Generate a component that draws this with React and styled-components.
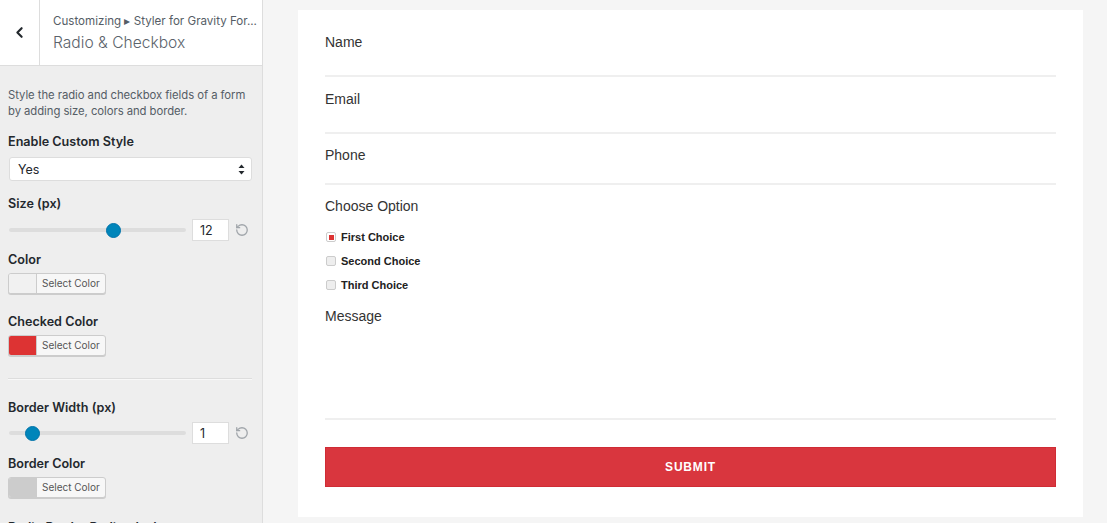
import styled, { createGlobalStyle } from "styled-components";
import { ChevronLeft, RotateCcw } from "lucide-react";

const GlobalStyle = createGlobalStyle`
  html, body {
    margin: 0;
    padding: 0;
    height: 100%;
  }
  body {
    font-family: Inter, "Noto Sans", sans-serif;
    background: #f5f5f5;
  }
  * {
    box-sizing: border-box;
  }
`;

const Page = styled.div`
  display: flex;
  height: 523px;
  overflow: hidden;
`;

const Sidebar = styled.aside`
  width: 263px;
  flex-shrink: 0;
  background: #eeeeee;
  border-right: 1px solid #dddddd;
  overflow: hidden;
`;

const Header = styled.div`
  display: flex;
  height: 66px;
  background: #ffffff;
  border-bottom: 1px solid #dddddd;
`;

const BackButton = styled.div`
  width: 40px;
  flex-shrink: 0;
  display: flex;
  align-items: center;
  justify-content: center;
  border-right: 1px solid #dddddd;
  color: #23282d;
`;

const HeaderText = styled.div`
  padding: 13px 0 0 13px;
  color: #555d66;
  min-width: 0;
`;

const Crumb = styled.div`
  font-size: 11.6px;
  line-height: 16px;
  white-space: nowrap;
`;

const Title = styled.div`
  font-size: 15.6px;
  font-weight: 300;
  line-height: 24px;
  margin-top: 2px;
  color: #5b636b;
`;

const Controls = styled.div`
  padding: 21px 10px 0 8px;
`;

const Description = styled.p`
  margin: 0 0 14px;
  font-size: 11.3px;
  letter-spacing: -0.05px;
  line-height: 16px;
  color: #555d66;
`;

const Control = styled.div`
  margin-bottom: ${(p) => p.$gap}px;
`;

const Label = styled.div`
  font-size: 12.6px;
  font-weight: 600;
  line-height: 18px;
  color: #23282d;
  margin-bottom: ${(p) => p.$gap}px;
  white-space: nowrap;
`;

const Select = styled.div`
  height: 24px;
  margin-left: 1px;
  display: flex;
  align-items: center;
  justify-content: space-between;
  padding: 0 6px 0 8px;
  background: #ffffff;
  border: 1px solid #dddddd;
  border-radius: 3px;
  font-size: 12.5px;
  color: #23282d;
`;

const SliderRow = styled.div`
  display: flex;
  align-items: center;
  height: 22px;
`;

const Track = styled.div`
  position: relative;
  width: 177px;
  height: 4px;
  margin-left: 1px;
  border-radius: 2px;
  background: #dddddd;
`;

const Thumb = styled.span`
  position: absolute;
  top: 50%;
  width: 15px;
  height: 15px;
  margin: -7.5px 0 0 -7.5px;
  border-radius: 50%;
  background: #0085ba;
  border: 1px solid #0073aa;
`;

const NumberBox = styled.div`
  width: 37px;
  height: 22px;
  margin-left: 6px;
  padding: 0 7px;
  display: flex;
  align-items: center;
  background: #ffffff;
  border: 1px solid #dddddd;
  font-size: 12.5px;
  color: #23282d;
`;

const Reset = styled.span`
  display: flex;
  margin-left: 6px;
  color: #a0a5aa;
`;

const ColorButton = styled.div`
  display: flex;
  width: fit-content;
  height: 21px;
  border: 1px solid #cccccc;
  border-radius: 3px;
  box-shadow: 0 1px 0 #cccccc;
  background: #f7f7f7;
  overflow: hidden;
`;

const Swatch = styled.span`
  width: 28px;
  background: ${(p) => p.$color};
  border-right: 1px solid #cccccc;
`;

const ColorText = styled.span`
  padding: 0 5px 0 5px;
  font-size: 10px;
  line-height: 19px;
  color: #555555;
`;

const Divider = styled.hr`
  margin: 0 0 19px;
  border: 0;
  border-top: 1px solid #dddddd;
  border-bottom: 1px solid #f8f8f8;
`;

const Preview = styled.main`
  flex: 1;
  display: flex;
  padding: 10px 24px 6px 35px;
  background: #f5f5f5;
`;

const Card = styled.div`
  flex: 1;
  background: #ffffff;
  padding: 24px 27px 0;
  font-family: "Liberation Sans", Arial, sans-serif;
  color: #333333;
`;

const Field = styled.div`
  margin-bottom: ${(p) => p.$gap}px;
`;

const FieldLabel = styled.div`
  font-size: 14px;
  line-height: 17px;
`;

const InputLine = styled.div`
  height: ${(p) => p.$height}px;
  border-bottom: 2px solid #efefef;
`;

const Choices = styled.div`
  margin-top: 10px;
`;

const Choice = styled.div`
  display: flex;
  align-items: center;
  height: 24px;
  font-size: 11px;
  font-weight: 700;
  color: #222222;
`;

const Box = styled.span`
  width: 10px;
  height: 10px;
  margin: 0 5px 0 1px;
  display: flex;
  align-items: center;
  justify-content: center;
  border: 1px solid #cccccc;
  border-radius: 2px;
  background: ${(p) => (p.$checked ? "#ffffff" : "#eeeeee")};

  &::after {
    content: "";
    display: ${(p) => (p.$checked ? "block" : "none")};
    width: 5px;
    height: 5px;
    background: #dd3333;
  }
`;

const Submit = styled.div`
  height: 40px;
  display: flex;
  align-items: center;
  justify-content: center;
  background: #d9363e;
  border: 1px solid #cf2c35;
  color: #ffffff;
  font-size: 12px;
  font-weight: 700;
  letter-spacing: 0.8px;
`;

const SelectArrows = () => (
  <svg width="7" height="11" viewBox="0 0 7 11">
    <path d="M3.5 0.5 L6.5 4 L0.5 4 Z" fill="#23282d" />
    <path d="M3.5 10.5 L6.5 7 L0.5 7 Z" fill="#23282d" />
  </svg>
);

const Slider = ({ value, pos }) => (
  <SliderRow>
    <Track>
      <Thumb style={{ left: `${pos}%` }} />
    </Track>
    <NumberBox>{value}</NumberBox>
    <Reset>
      <RotateCcw size={14} strokeWidth={2.2} />
    </Reset>
  </SliderRow>
);

const ColorPicker = ({ color }) => (
  <ColorButton>
    <Swatch $color={color} />
    <ColorText>Select Color</ColorText>
  </ColorButton>
);

const choices = ["First Choice", "Second Choice", "Third Choice"];

export default function App() {
  return (
    <>
      <GlobalStyle />
      <Page>
        <Sidebar>
          <Header>
            <BackButton>
              <ChevronLeft size={17} strokeWidth={3} />
            </BackButton>
            <HeaderText>
              <Crumb>Customizing ▸ Styler for Gravity For...</Crumb>
              <Title>Radio &amp; Checkbox</Title>
            </HeaderText>
          </Header>
          <Controls>
            <Description>
              Style the radio and checkbox fields of a form by adding size,
              colors and border.
            </Description>
            <Control $gap={14}>
              <Label $gap={6}>Enable Custom Style</Label>
              <Select>
                Yes
                <SelectArrows />
              </Select>
            </Control>
            <Control $gap={10}>
              <Label $gap={6}>Size (px)</Label>
              <Slider value="12" pos={59} />
            </Control>
            <Control $gap={19}>
              <Label $gap={4}>Color</Label>
              <ColorPicker color="#f1f1f1" />
            </Control>
            <Control $gap={22}>
              <Label $gap={4}>Checked Color</Label>
              <ColorPicker color="#dd3333" />
            </Control>
            <Divider />
            <Control $gap={11}>
              <Label $gap={5}>Border Width (px)</Label>
              <Slider value="1" pos={13} />
            </Control>
            <Control $gap={21}>
              <Label $gap={4}>Border Color</Label>
              <ColorPicker color="#cccccc" />
            </Control>
            <Control $gap={0}>
              <Label $gap={0}>Radio Border Radius (px)</Label>
            </Control>
          </Controls>
        </Sidebar>
        <Preview>
          <Card>
            <Field $gap={14}>
              <FieldLabel>Name</FieldLabel>
              <InputLine $height={26} />
            </Field>
            <Field $gap={13}>
              <FieldLabel>Email</FieldLabel>
              <InputLine $height={26} />
            </Field>
            <Field $gap={13}>
              <FieldLabel>Phone</FieldLabel>
              <InputLine $height={21} />
            </Field>
            <Field $gap={11}>
              <FieldLabel>Choose Option</FieldLabel>
              <Choices>
                {choices.map((c, i) => (
                  <Choice key={c}>
                    <Box $checked={i === 0} />
                    {c}
                  </Choice>
                ))}
              </Choices>
            </Field>
            <Field $gap={27}>
              <FieldLabel>Message</FieldLabel>
              <InputLine $height={95} />
            </Field>
            <Submit>SUBMIT</Submit>
          </Card>
        </Preview>
      </Page>
    </>
  );
}
